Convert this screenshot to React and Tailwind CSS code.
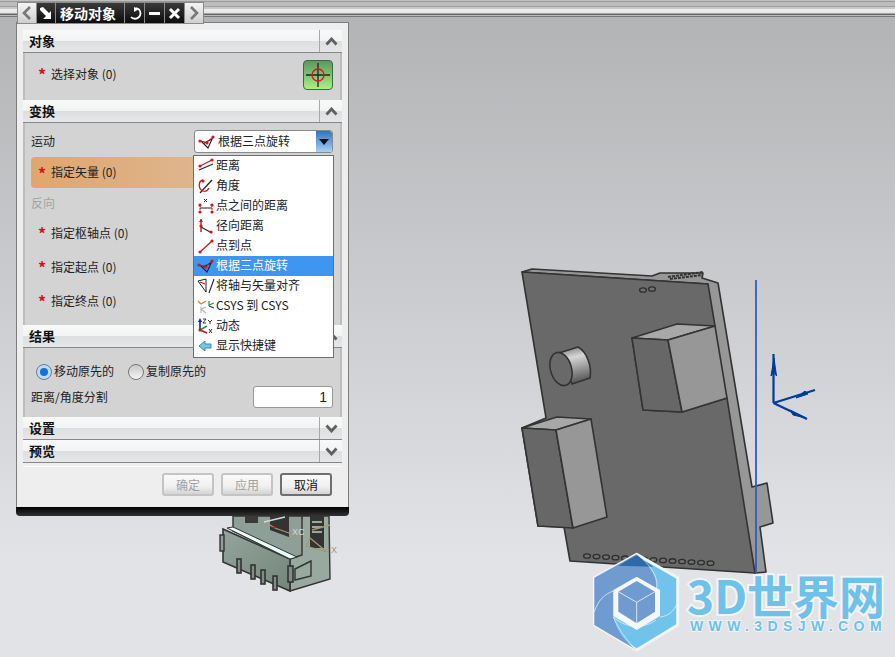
const cjk = '"Noto Sans CJK SC", "Noto Sans", sans-serif'

function Dot({ x, y }) {
  return <circle cx={x} cy={y} r="1.6" fill="#d8141c" />
}

function ThreePointIcon() {
  return (
    <svg width="18" height="16" viewBox="0 0 18 16">
      <path d="M3 7 L10 14 L15 3 M6 9 L14 5" stroke="#222" strokeWidth="1.1" fill="none" />
      <path d="M2 7 L7 8 M15 3 L10 7" stroke="#d8141c" strokeWidth="1" fill="none" />
      <Dot x={2} y={7} />
      <Dot x={9} y={9} />
      <Dot x={15} y={3} />
    </svg>
  )
}

function MenuIcon({ name }) {
  if (name === 'distance') {
    return (
      <svg width="18" height="16" viewBox="0 0 18 16">
        <path d="M2 12 L16 6" stroke="#222" strokeWidth="1.2" />
        <path d="M3 8 L15 2" stroke="#c8141c" strokeWidth="1.2" />
        <Dot x={3} y={8} />
        <Dot x={15} y={2} />
      </svg>
    )
  }
  if (name === 'angle') {
    return (
      <svg width="18" height="16" viewBox="0 0 18 16">
        <path d="M3 15 L15 2" stroke="#222" strokeWidth="1.2" />
        <path d="M6 2 C1 3 1 11 6 13 C9 14 11 12 12 10" stroke="#d8141c" strokeWidth="1.3" fill="none" />
        <Dot x={6} y={3} />
      </svg>
    )
  }
  if (name === 'between') {
    return (
      <svg width="18" height="16" viewBox="0 0 18 16">
        <path d="M3 7 V13 M15 7 V13" stroke="#d8141c" strokeWidth="1" strokeDasharray="2 1" />
        <path d="M3 10 H15" stroke="#222" strokeWidth="1" />
        <path d="M7 1 L10 4 M10 1 L7 4" stroke="#222" strokeWidth="1" />
        <Dot x={3} y={7} />
        <Dot x={15} y={7} />
        <Dot x={3} y={14} />
        <Dot x={15} y={14} />
      </svg>
    )
  }
  if (name === 'radial') {
    return (
      <svg width="18" height="16" viewBox="0 0 18 16">
        <path d="M4 1 V14" stroke="#c8141c" strokeWidth="1.4" />
        <path d="M4 9 L15 15" stroke="#222" strokeWidth="1.1" />
        <path d="M2 4 L4 1 L6 4 Z" fill="#c8141c" />
        <Dot x={4} y={8} />
        <Dot x={14} y={14} />
      </svg>
    )
  }
  if (name === 'p2p') {
    return (
      <svg width="18" height="16" viewBox="0 0 18 16">
        <path d="M3 14 L15 3" stroke="#c8141c" strokeWidth="1.2" />
        <Dot x={3} y={14} />
        <Dot x={15} y={3} />
      </svg>
    )
  }
  if (name === 'three') return <ThreePointIcon />
  if (name === 'align') {
    return (
      <svg width="18" height="16" viewBox="0 0 18 16">
        <path d="M1 3 L9 14 L9 1 Z" stroke="#222" strokeWidth="1" fill="none" />
        <path d="M3 4 L8 6" stroke="#d8141c" strokeWidth="1.2" />
        <path d="M12 15 L17 1" stroke="#222" strokeWidth="1.1" />
      </svg>
    )
  }
  if (name === 'csys') {
    return (
      <svg width="18" height="16" viewBox="0 0 18 16">
        <path d="M4 6 L1 3 M4 6 L9 3" stroke="#e8821e" strokeWidth="1.3" />
        <path d="M12 8 V3 M12 7 L17 5" stroke="#1a9a3a" strokeWidth="1.2" />
        <path d="M12 8 L17 10" stroke="#1c2fb0" strokeWidth="1.2" />
        <path d="M4 9 V15 M4 11 L9 9 M4 11 L9 15" stroke="#b5b5b5" strokeWidth="1.1" />
      </svg>
    )
  }
  if (name === 'dynamic') {
    return (
      <svg width="18" height="16" viewBox="0 0 18 16">
        <path d="M3 12 V2" stroke="#1020b0" strokeWidth="1.6" />
        <path d="M1 4 L3 0 L5 4 Z" fill="#1020b0" />
        <path d="M3 12 L10 8" stroke="#1a9a3a" strokeWidth="1.6" />
        <path d="M3 12 L10 15" stroke="#c8141c" strokeWidth="1.6" />
        <path d="M6 1 H9 L6 5 H9" stroke="#222" strokeWidth="0.9" fill="none" />
        <path d="M11 2 L13 4 L15 2 M13 4 V6" stroke="#222" strokeWidth="0.9" fill="none" />
        <path d="M12 11 L15 15 M15 11 L12 15" stroke="#222" strokeWidth="0.9" />
        <Dot x={3} y={12} />
      </svg>
    )
  }
  return (
    <svg width="18" height="16" viewBox="0 0 18 16">
      <path d="M2 8 L8 3 V6 H14 V10 H8 V13 Z" fill="#7cc4e4" stroke="#3a8cb4" strokeWidth="1" />
    </svg>
  )
}

const menuItems = [
  { icon: 'distance', label: '距离' },
  { icon: 'angle', label: '角度' },
  { icon: 'between', label: '点之间的距离' },
  { icon: 'radial', label: '径向距离' },
  { icon: 'p2p', label: '点到点' },
  { icon: 'three', label: '根据三点旋转', active: true },
  { icon: 'align', label: '将轴与矢量对齐' },
  { icon: 'csys', label: 'CSYS 到 CSYS' },
  { icon: 'dynamic', label: '动态' },
  { icon: 'shortcut', label: '显示快捷键' },
]

function SectionHeader({ title, open }) {
  return (
    <div className="flex h-[23px] border-b border-[#85878a] bg-[linear-gradient(#f8f9f9_0%,#f2f3f3_50%,#dcdee0_52%,#e6e7e9_100%)]">
      <div className="flex-1 pl-[6px] text-[13px] leading-[21px] font-bold text-[#111]">{title}</div>
      <div className="flex w-[23px] items-center justify-center border-l border-[#a8a8a8]">
        <svg width="13" height="9" viewBox="0 0 13 9">
          <path d={open ? 'M1.500 7.500 L6.500 2 L11.500 7.500' : 'M1.500 1.500 L6.500 7 L11.500 1.500'} stroke="#606060" strokeWidth="2.8" fill="none" />
        </svg>
      </div>
    </div>
  )
}

function RequiredRow({ label }) {
  return (
    <div className="flex h-[34px] items-center pl-[13px] text-[12px] text-[#222]">
      <span className="w-[13px] text-[16px] leading-[16px] font-bold text-[#d6121a]">*</span>
      <span>{label}</span>
    </div>
  )
}

function TitleTab({ children, light, className }) {
  return (
    <div
      className={`flex h-[20px] items-center justify-center border-r border-[#8a8a8a] ${
        light ? 'bg-[linear-gradient(#f4f4f4,#cfcfcf)]' : 'bg-[linear-gradient(#3a3a3a,#0c0c0c)]'
      } ${className}`}
    >
      {children}
    </div>
  )
}

function TitleBar() {
  return (
    <div className="absolute top-[2px] left-[17px] flex w-[187px] border border-[#8a8a8a] bg-[#8a8a8a]" style={{ fontFamily: cjk }}>
      <TitleTab light className="w-[19px]">
        <svg width="10" height="14" viewBox="0 0 10 14"><path d="M8 1 L2 7 L8 13" stroke="#777" strokeWidth="2.6" fill="none" /></svg>
      </TitleTab>
      <TitleTab className="w-[19px]">
        <svg width="14" height="14" viewBox="0 0 14 14"><path d="M1 2 L4 1 L10 7 L12 5 L12 13 L4 13 L7 10 L1 4 Z" fill="#fff" /></svg>
      </TitleTab>
      <TitleTab className="w-[69px] pr-[4px] text-[14px] font-bold text-white">移动对象</TitleTab>
      <TitleTab className="w-[20px]">
        <svg width="14" height="14" viewBox="0 0 14 14"><path d="M8 2 L11 3.500 A5 5 0 1 1 3 11" stroke="#fff" strokeWidth="1.8" fill="none" /><path d="M6 1 L6 6 L11 3 Z" fill="#fff" /></svg>
      </TitleTab>
      <TitleTab className="w-[20px]">
        <div className="h-[3px] w-[11px] bg-white" />
      </TitleTab>
      <TitleTab className="w-[20px]">
        <svg width="13" height="13" viewBox="0 0 13 13"><path d="M2 2 L11 11 M11 2 L2 11" stroke="#fff" strokeWidth="3" /></svg>
      </TitleTab>
      <TitleTab light className="flex-1 border-r-0">
        <svg width="10" height="14" viewBox="0 0 10 14"><path d="M2 1 L8 7 L2 13" stroke="#777" strokeWidth="2.6" fill="none" /></svg>
      </TitleTab>
    </div>
  )
}

function FooterButton({ label, disabled }) {
  return (
    <div
      className={`flex h-[23px] w-[52px] items-center justify-center rounded-[3px] border-2 bg-[linear-gradient(#fafafa_0%,#f0f0f0_60%,#d4d4d4_100%)] text-[12px] ${
        disabled ? 'border-[#c4c4c4] text-[#a0a0a0]' : 'border-[#6f6f6f] text-[#111]'
      }`}
    >
      {label}
    </div>
  )
}

function Dialog() {
  return (
    <div className="absolute top-[22px] left-[16px] w-[333px]" style={{ fontFamily: cjk }}>
      <div className="border-x border-t border-[#7c7c7c] bg-[#eeeeee] px-[6px] pt-[7px] pb-[10px]">
        <SectionHeader title="对象" open />
        <div className="flex h-[47px] items-start justify-between border-x-2 border-x-[#bdbdbd] bg-[#d3d3d3] pt-[4px] pr-[7px]">
          <RequiredRow label="选择对象 (0)" />
          <div className="mt-[3px] flex h-[30px] w-[30px] items-center justify-center rounded-[4px] border border-[#3c6a42] bg-[linear-gradient(#5c9860,#7fc470_50%,#aaf084)]">
            <svg width="26" height="26" viewBox="0 0 26 26">
              <path d="M1 13 H25 M13 1 V25" stroke="#222" strokeWidth="1.3" />
              <circle cx="13" cy="13" r="6" stroke="#e0141c" strokeWidth="1.3" fill="none" />
            </svg>
          </div>
        </div>

        <SectionHeader title="变换" open />
        <div className="border-x-2 border-x-[#bdbdbd] bg-[#d3d3d3] pt-[7px] pb-[7px]">
          <div className="flex h-[23px] items-center justify-between pr-[7px] pl-[6px] text-[12px] text-[#222]">
            <span className="-translate-y-px">运动</span>
            <div className="flex h-[23px] w-[139px] items-center rounded-[3px] border border-[#8a8a8a] bg-white">
              <div className="ml-[3px]"><ThreePointIcon /></div>
              <span className="ml-[2px] flex-1 -translate-y-px text-[12px] text-[#222]">根据三点旋转</span>
              <div className="flex h-full w-[16px] items-center justify-center rounded-r-[3px] bg-[linear-gradient(#2f72c4,#a5d2f5)]">
                <div className="h-0 w-0 border-x-[5px] border-t-[6px] border-x-transparent border-t-[#111]" />
              </div>
            </div>
          </div>
          <div className="mt-[4px] mr-[7px] ml-[6px] flex h-[31px] items-center rounded-[4px] bg-[linear-gradient(90deg,#e2a56c,#d8c4ac)] pl-[7px] text-[12px] text-[#222]">
            <span className="w-[13px] text-[16px] leading-[16px] font-bold text-[#d6121a]">*</span>
            <span className="-translate-y-px">指定矢量 (0)</span>
          </div>
          <div className="h-[28px] pt-[6px] pl-[6px] text-[12px] text-[#a3a3a3]">反向</div>
          <RequiredRow label="指定枢轴点 (0)" />
          <RequiredRow label="指定起点 (0)" />
          <RequiredRow label="指定终点 (0)" />
        </div>

        <SectionHeader title="结果" open />
        <div className="h-[69px] border-x-2 border-x-[#bdbdbd] bg-[#d3d3d3] pt-[14px] pr-[7px] pl-[11px] text-[12px] text-[#222]">
          <div className="flex h-[20px] items-center">
            <div className="flex h-[16px] w-[16px] items-center justify-center rounded-full border border-[#5f7f9f] bg-[#bcdcf4]">
              <div className="h-[8px] w-[8px] rounded-full bg-[#1670d8]" />
            </div>
            <span className="ml-[2px] -translate-y-px">移动原先的</span>
            <div className="ml-[14px] h-[16px] w-[16px] rounded-full border border-[#777] bg-[linear-gradient(#c8c8c8,#f4f4f4)]" />
            <span className="ml-[2px] -translate-y-px">复制原先的</span>
          </div>
          <div className="mt-[4px] -ml-[5px] flex h-[22px] items-center justify-between">
            <span>距离/角度分割</span>
            <div className="flex h-[22px] w-[80px] items-center justify-end rounded-[3px] border border-[#9a9a9a] bg-white pr-[5px] text-[14px] font-light text-[#222]" style={{ fontFamily: '"Liberation Sans", sans-serif' }}>
              1
            </div>
          </div>
        </div>

        <SectionHeader title="设置" />
        <SectionHeader title="预览" />

        <div className="mt-[3px] border-t border-[#fbfbfb] pt-[6px]">
          <div className="flex justify-end gap-[7px] pr-[10px]">
            <FooterButton label="确定" disabled />
            <FooterButton label="应用" disabled />
            <FooterButton label="取消" />
          </div>
        </div>
        <div className="h-px" />
      </div>
      <div className="h-[9px] rounded-b-[4px] bg-[linear-gradient(#000,#333)]" />
    </div>
  )
}

function DropdownMenu() {
  return (
    <div
      className="absolute top-[155px] left-[193px] w-[141px] border border-[#6e6e6e] bg-white pb-[1px] text-[12px] text-[#222]"
      style={{ fontFamily: cjk }}
    >
      {menuItems.map((item) => (
        <div
          key={item.label}
          className={`flex h-[20px] items-center pl-[3px] ${item.active ? 'bg-[#3f96f0] text-white' : ''}`}
        >
          <MenuIcon name={item.icon} />
          <span className="ml-[1px] -translate-y-px">{item.label}</span>
        </div>
      ))}
    </div>
  )
}

function Board() {
  const edge = { stroke: '#333', strokeWidth: 1.6, strokeLinejoin: 'round' }
  const topHoles = [[643, 290], [652, 289]]
  const bottomHoles = Array.from({ length: 14 }, (_, i) => [587 + i * 9.5, 556 + i * 0.55])
  return (
    <svg className="absolute inset-0" width="895" height="657" viewBox="0 0 895 657">
      <defs>
        <linearGradient id="cyl" x1="0" y1="0" x2="0.2" y2="1">
          <stop offset="0" stopColor="#6e6e6e" />
          <stop offset="0.35" stopColor="#d6d6d6" />
          <stop offset="1" stopColor="#5c5c5c" />
        </linearGradient>
        <linearGradient id="conn" x1="0" y1="0" x2="1" y2="1">
          <stop offset="0" stopColor="#93a59c" />
          <stop offset="1" stopColor="#74857c" />
        </linearGradient>
      </defs>

      {/* board, far edge and side */}
      <polygon points="522,272 532,269 652,276 660,273 703,273 702,278 718,283 752,487 767,483 773,523 760,527 766,572 755,573 700,400 708,284" fill="#979797" {...edge} />
      <path d="M668,277 L703,272 M670,279 L702,275" stroke="#333" strokeWidth="2" strokeDasharray="3 1" />
      <polygon points="522,272 708,284 715,326 632,338 643,410 682,412 727,398 755,573 570,561 564,527 538,526 522,428 546,418" fill="#696969" {...edge} />
      {topHoles.concat(bottomHoles).map(([x, y]) => (
        <ellipse key={`${x}-${y}`} cx={x} cy={y} rx="3.4" ry="2.2" fill="#707070" stroke="#2e2e2e" strokeWidth="1.3" />
      ))}

      {/* upper box */}
      <polygon points="632,338 677,324 715,326 668,340" fill="#a8a8a8" {...edge} />
      <polygon points="632,338 668,340 682,412 643,410" fill="#676767" {...edge} />
      <polygon points="668,340 715,326 727,398 682,412" fill="#979797" {...edge} />

      {/* lower box */}
      <polygon points="522,428 557,417 591,419 556,430" fill="#a8a8a8" {...edge} />
      <polygon points="522,428 556,430 573,528 538,526" fill="#676767" {...edge} />
      <polygon points="556,430 591,419 607,517 573,528" fill="#979797" {...edge} />

      {/* cylinder */}
      <path d="M559,353 L578,347 C587,352 592,366 590,378 L572,384 Z" fill="url(#cyl)" {...edge} />
      <ellipse cx="561" cy="369" rx="10.500" ry="17" transform="rotate(-16 561 369)" fill="#696969" {...edge} />

      {/* axis and triad */}
      <path d="M756,280 V573" stroke="#2a5fc0" strokeWidth="1.8" />
      <path d="M773.500,403 V354 M773.500,403 L815,390 M773.500,403 L807,419" stroke="#003a9e" strokeWidth="2.2" fill="none" />
      <path d="M771,376 L774,358 L776.500,376 L774,372 Z M796,398 L805,391 L808,394 Z M790,410 L806,418 L793,415 Z" fill="#003a9e" stroke="#003a9e" />

      {/* connector under the dialog */}
      <polygon points="302,516 329,516 330,579 290,591 290,558 297,557" fill="#98aa9f" stroke="#333" strokeWidth="1.4" />
      <polygon points="233,516 302,516 302,555 290,559 233,531" fill="#8d9f96" stroke="#333" strokeWidth="1.4" />
      <polygon points="223,529 290,559 290,591 223,562" fill="url(#conn)" stroke="#333" strokeWidth="1.6" />
      <polygon points="227,528 233,527 297,557 290,559" fill="#e8fbf6" stroke="#333" strokeWidth="1" />
      <rect x="245" y="516" width="13" height="7" fill="#3a3a3a" />
      <polygon points="270,516 289,516 289,537 270,530" fill="#333" />
      <rect x="310" y="516" width="14" height="32" fill="#333" />
      <path d="M312,522 H322 M312,527 H322 M312,532 H322" stroke="#98aa9f" strokeWidth="2" />
      <rect x="220" y="535" width="4" height="16" fill="#8d9f96" stroke="#333" strokeWidth="1.4" />
      <rect x="237" y="559" width="4" height="14" fill="#7d8e85" stroke="#333" strokeWidth="1.6" />
      <rect x="251" y="565" width="4" height="14" fill="#7d8e85" stroke="#333" strokeWidth="1.6" />
      <rect x="261" y="570" width="4" height="14" fill="#7d8e85" stroke="#333" strokeWidth="1.6" />
      <rect x="273" y="576" width="4" height="14" fill="#7d8e85" stroke="#333" strokeWidth="1.6" />
      <rect x="288" y="566" width="5" height="16" fill="#7d8e85" stroke="#333" strokeWidth="1.6" />
      <polygon points="295,569 311,561 311,576 295,580" fill="#98aa9f" stroke="#333" strokeWidth="1.4" />
      <path d="M265,522 L275,528 L300,537 M306,546 L327,552 L310,538 L306,546 M312,530 L330,525" stroke="#a09a70" strokeWidth="1.3" fill="none" />
      <path d="M264,522 L285,517" stroke="#d8d8d8" strokeWidth="1.4" />
      <circle cx="274" cy="527" r="1.2" fill="#e0141c" />
      <text x="331" y="553" fontSize="9" fill="#a09a70" fontFamily="Liberation Sans">X</text>
      <text x="292" y="535" fontSize="9" fill="#d8d8d8" fontFamily="Liberation Sans">XC</text>
    </svg>
  )
}

function Watermark() {
  return (
    <>
      <svg className="absolute top-[550px] left-[590px]" width="92" height="104" viewBox="0 0 92 104">
        <polygon points="46.700,4.300 87.700,27.700 87.700,75 46.700,100 4.300,75 4.300,27.700" fill="#71c3ec" stroke="#f2f4f6" strokeWidth="3" strokeLinejoin="round" />
        <path d="M46.700,4.300 L4.300,27.700 L4.300,75 L46.700,100 C35,92 27,82 23.300,66.700 L23.300,41.700 L46.700,26.700 L65.700,40 C69,28 58,14 46.700,4.300 Z" fill="#6f9bd1" />
        <polygon points="28.300,15.700 46.700,5 58.300,13.300 63.300,16.700" fill="#2e6aa8" />
        <path d="M4.300,62 C8,50 15,44 23.300,41 M46.700,4.300 C60,14 70,28 66,40 M87.700,52 C84,62 78,66 70,67 M23.300,67 C30,82 38,92 46.700,100 M23.300,67 C38,80 55,78 66,70" stroke="#dfeef8" strokeWidth="0.8" fill="none" />
        <polygon points="46.700,26.700 70,40 70,66 46.700,80 23.300,66 23.300,40" fill="#f4f6f8" />
        <polygon points="46.700,31 65,41.700 65,61.700 46.700,73.300 28.300,61.700 28.300,41.700" fill="#6f9bd1" />
        <path d="M28.300,41.700 L46.700,52.300 L65,41.700 M46.700,52.300 V73.300" stroke="#f4f6f8" strokeWidth="0.8" fill="none" />
      </svg>
      <div
        className="absolute top-[571px] left-[687px] text-[46px] leading-[46px] font-bold whitespace-nowrap text-[#6dc1ea] [-webkit-text-stroke:4px_#f2f4f6] [paint-order:stroke_fill]"
        style={{ fontFamily: cjk }}
      >
        3D世界网
      </div>
      <div
        className="absolute top-[619px] left-[690px] text-[14px] leading-[15px] font-bold tracking-[5.4px] whitespace-nowrap text-[#6dc1ea] [-webkit-text-stroke:2px_#f2f4f6] [paint-order:stroke_fill]"
        style={{ fontFamily: '"Liberation Sans", sans-serif' }}
      >
        WWW.3DSJW.COM
      </div>
    </>
  )
}

export default function App() {
  return (
    <div className="relative h-[657px] w-[895px] overflow-hidden bg-[linear-gradient(#b3b4b6_0%,#b3b4b6_3%,#e2e3e6_85%)]">
      <div className="h-[18px] bg-[linear-gradient(#c0c0c0_0,#c0c0c0_1px,#999_1px,#999_2px,#bdbdbd_2px,#bdbdbd_6px,#a0a0a0_6px,#a0a0a0_7px,#c8c8c8_7px,#c8c8c8_9px,#f0f0f0_9px,#e4e4e4_13px,#666_14px,#666_15px,#bbb_15px,#bbb_16px,#777_16px,#777_17px,#b3b4b6_17px)]" />
      <Board />
      <Watermark />
      <Dialog />
      <DropdownMenu />
      <TitleBar />
    </div>
  )
}
